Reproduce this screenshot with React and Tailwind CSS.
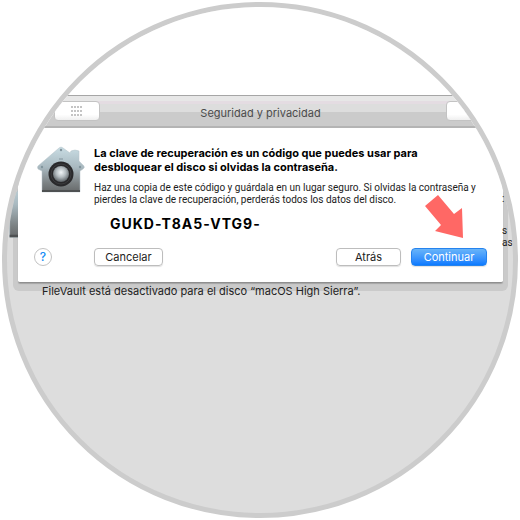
const sheetButton =
  "h-[18px] rounded border text-[11px] leading-4 shadow-[0_1px_1px_rgba(0,0,0,0.12)]";

function VaultHouse({ className }) {
  return (
    <svg viewBox="0 0 48 48" className={className} aria-hidden="true">
      <defs>
        <linearGradient id="wall" x1="0" y1="0" x2="0" y2="1">
          <stop offset="0" stopColor="#c9dde4" />
          <stop offset="0.45" stopColor="#a9b9c0" />
          <stop offset="0.8" stopColor="#7c8284" />
          <stop offset="1" stopColor="#66696a" />
        </linearGradient>
        <radialGradient id="dial" cx="0.5" cy="0.4" r="0.6">
          <stop offset="0" stopColor="#f2f6f8" />
          <stop offset="0.5" stopColor="#b4bcc0" />
          <stop offset="1" stopColor="#5b6165" />
        </radialGradient>
      </defs>
      <path
        d="M22 2 Q24 0 26 2 L33 7 L34 5 Q38 3 42 5 V15 L47 20 Q48 22 46 23 L43 25 V46 H5 V25 L1 23 Q0 21 1 20 Z"
        fill="url(#wall)"
        stroke="#b4c2c8"
        strokeWidth="0.5"
      />
      <path d="M5 45 H43" stroke="#4e5152" strokeWidth="2" />
      <circle cx="24" cy="4" r="1.2" fill="#82949c" />
      <circle cx="5" cy="21" r="1.2" fill="#82949c" />
      <circle cx="43" cy="21" r="1.2" fill="#82949c" />
      <path d="M22 13 H26" stroke="#82949c" />
      <circle cx="24" cy="28" r="12.5" fill="#29292b" />
      <circle cx="24" cy="28" r="10" fill="none" stroke="#3c3c3e" />
      <circle cx="24" cy="28" r="8" fill="url(#dial)" />
    </svg>
  );
}

function GridDots() {
  const cols = [0, 3, 6, 9];
  const rows = [0, 4, 8];
  return (
    <svg viewBox="0 0 12 10" className="h-[10px] w-3" aria-hidden="true">
      {rows.map((y) =>
        cols.map((x) => <rect key={`${x}-${y}`} x={x} y={y} width="2" height="2" fill="#c4c4c4" />)
      )}
    </svg>
  );
}

function TitleBar() {
  return (
    <header className="relative z-10 grid h-[33px] grid-cols-[1fr_auto_1fr] items-center border-t border-b-2 border-t-[#a6a6a6] border-b-[#b4b4b4] bg-[linear-gradient(#e7e7e7_0_5px,#e4dce2_5px_8px,#dddddd_8px_16px,#cbcbcb_16px)] pl-[47px]">
      <button
        aria-label="Mostrar todo"
        className="flex h-5 w-[46px] items-center justify-center rounded border border-[#c3c3c3] bg-linear-to-b from-white from-70% to-[#efefef]"
      >
        <GridDots />
      </button>
      <h1 className="pr-[46px] pt-1 text-[11px] leading-4 text-[#4c4c4c]">Seguridad y privacidad</h1>
      <input
        type="search"
        aria-label="Buscar"
        className="h-5 w-[67px] justify-self-end rounded border border-[#c3c3c3] bg-linear-to-b from-white from-70% to-[#efefef]"
      />
    </header>
  );
}

function Sheet() {
  return (
    <section className="relative mr-[10px] ml-[11px] rounded-b-xs border-b border-[#8f8f8f] bg-white px-4 pt-[18px] pb-4 shadow-[0_1px_1px_#a5a5a5,0_3px_0_5px_#cacaca]">
      <div className="flex">
        <VaultHouse className="ml-[3px] h-12 w-12 shrink-0" />
        <div className="ml-[9px] min-w-0 grow">
          <h2 className="text-[11px] leading-[14px] font-bold whitespace-nowrap text-black">
            La clave de recuperación es un código que puedes usar para
            <br />
            desbloquear el disco si olvidas la contraseña.
          </h2>
          <p className="mt-2 font-['Roboto',sans-serif] text-[10px] leading-3 whitespace-nowrap text-[#1c1c1c]">
            Haz una copia de este código y guárdala en un lugar seguro. Si olvidas la contraseña y
            <br />
            pierdes la clave de recuperación, perderás todos los datos del disco.
          </p>
          <p className="mt-2 ml-4 text-sm leading-5 font-bold tracking-[1px] text-black">GUKD-T8A5-VTG9-</p>
        </div>
      </div>
      <div className="mt-[14px] flex items-center">
        <button
          aria-label="Ayuda"
          className="h-[18px] w-[18px] rounded-full border border-[#c2c2c2] text-xs leading-4 font-medium text-[#168cf5]"
        >
          ?
        </button>
        <button className={`${sheetButton} ml-[42px] w-[69px] border-[#bdbdbd] text-[#222]`}>Cancelar</button>
        <button className={`${sheetButton} ml-auto w-[65px] border-[#bdbdbd] text-[#222]`}>Atrás</button>
        <button
          className={`${sheetButton} ml-[10px] w-[76px] border-[#2583ee] bg-linear-to-b from-[#68b4f9] to-[#087aff] text-white`}
        >
          Continuar
        </button>
      </div>
      <svg viewBox="0 0 38 43" className="absolute top-[67px] right-10 h-[43px] w-[38px]" aria-hidden="true">
        <path d="M0 11 L13 0 L29 19 L37 13 L38 43 L10 36 L16 30 Z" fill="#ff6865" />
      </svg>
    </section>
  );
}

export default function App() {
  return (
    <div className="p-[2px] font-['Inter',sans-serif]">
      <main className="aspect-square w-full overflow-hidden rounded-full border-[5px] border-[#ccc] bg-[#ddd]">
        <div className="bg-white pt-[88px]">
          <TitleBar />
        </div>
        <div className="relative">
          <Sheet />
          {/* pane content that peeks out on both sides of the sheet */}
          <div className="absolute inset-y-0 left-0 w-[11px] overflow-hidden">
            <VaultHouse className="mt-12 -ml-1 h-16 w-16 max-w-none" />
          </div>
          <div className="absolute inset-y-0 right-0 w-[11px] pt-[65px] font-['Roboto',sans-serif] text-[10px] leading-3 text-[#222]">
            <p>:</p>
            <p className="mt-5">s</p>
            <p>as</p>
          </div>
        </div>
        <p className="relative pl-[35px] text-[11px] leading-4 text-[#222]">
          FileVault está desactivado para el disco “macOS High Sierra”.
        </p>
      </main>
    </div>
  );
}
